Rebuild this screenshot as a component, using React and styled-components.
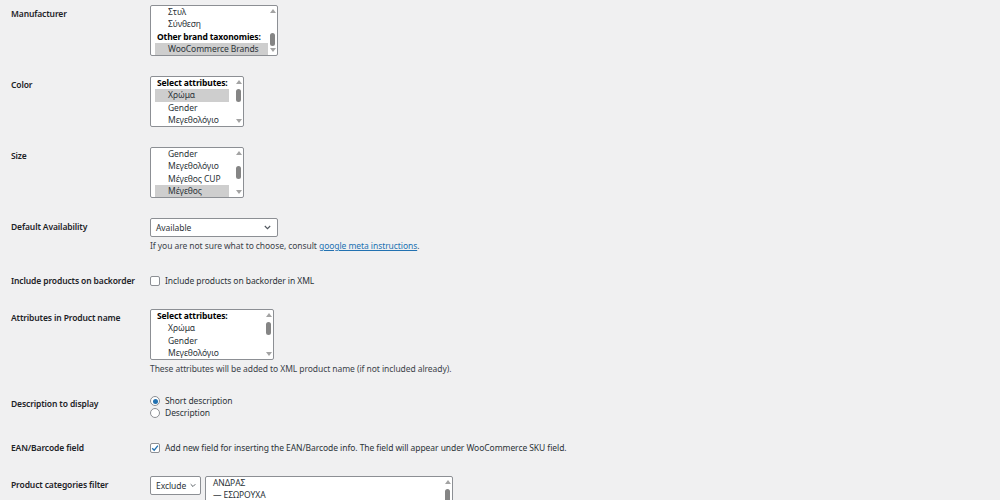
import React from 'react';
import styled, { createGlobalStyle } from 'styled-components';

const GlobalStyle = createGlobalStyle`
  html, body {
    margin: 0;
    padding: 0;
    background: #f0f0f1;
  }
  body {
    font-family: "Noto Sans", "Open Sans", sans-serif;
    font-size: 8.5px;
    letter-spacing: -0.07px;
    color: #2c3338;
  }
`;

const Page = styled.div`
  width: 1000px;
  height: 500px;
  overflow: hidden;
  padding: 0 0 0 11px;
  box-sizing: border-box;
`;

const FormTable = styled.div`
  margin-top: -5px;
  display: grid;
  grid-template-columns: 139px 1fr;
`;

const Label = styled.div`
  padding-top: 13px;
  line-height: 12px;
  font-weight: 600;
  letter-spacing: -0.12px;
  color: #1d2327;
`;

const Field = styled.div`
  padding: 10px 0;
  line-height: 12px;
`;

const ListBox = styled.div`
  display: flex;
  width: ${(p) => p.width}px;
  height: 51px;
  box-sizing: border-box;
  background: #fff;
  border: 1px solid #8c8f94;
  border-radius: 2px;
  overflow: hidden;
`;

const Options = styled.div`
  flex: 1;
  padding: 0 ${(p) => p.gap}px 0 4px;
  overflow: hidden;
`;

const Group = styled.div`
  height: 12.3px;
  line-height: 12.3px;
  padding-left: 2px;
  font-weight: 700;
  letter-spacing: -0.12px;
  color: #000;
  white-space: nowrap;
`;

const Option = styled.div`
  height: 12.3px;
  line-height: 12.3px;
  padding-left: ${(p) => (p.flat ? 3 : 13)}px;
  color: #2c3338;
  white-space: nowrap;
  background: ${(p) => (p.selected ? '#cecece' : 'transparent')};
`;

const Scroll = styled.div`
  width: 9px;
  flex: none;
  display: flex;
  flex-direction: column;
  align-items: center;
  padding: 3px 0;
`;

const Arrow = styled.div`
  width: 0;
  height: 0;
  border-left: 3px solid transparent;
  border-right: 3px solid transparent;
  ${(p) => (p.down ? 'border-top: 4px solid #a3a3a3;' : 'border-bottom: 4px solid #a3a3a3;')}
`;

const Track = styled.div`
  flex: 1;
  display: flex;
  flex-direction: column;
  align-items: center;
  padding-top: ${(p) => p.offset}px;
`;

const Thumb = styled.div`
  width: 5px;
  height: 13px;
  margin-top: 4px;
  border-radius: 3px;
  background: #858585;
`;

const Select = styled.div`
  display: flex;
  align-items: center;
  justify-content: space-between;
  width: ${(p) => p.width}px;
  height: 19px;
  box-sizing: border-box;
  padding: 0 ${(p) => (p.compact ? 4 : 6)}px 0 5px;
  gap: 3px;
  background: #fff;
  border: 1px solid #8c8f94;
  border-radius: 2px;
  color: #2c3338;
`;

const Description = styled.p`
  margin: 3px 0 0;
  line-height: 12px;
  color: #3c434a;
`;

const Link = styled.a`
  color: #2271b1;
  text-decoration: underline;
`;

const CheckRow = styled.label`
  display: flex;
  align-items: center;
  gap: 5px;
  height: ${(p) => (p.tall ? 17 : 12)}px;
  color: #2c3338;
`;

const Box = styled.span`
  width: 10px;
  height: 10px;
  box-sizing: border-box;
  flex: none;
  background: #fff;
  border: 1px solid #8c8f94;
  border-radius: 2px;
  display: flex;
  align-items: center;
  justify-content: center;
`;

const Radio = styled.span`
  width: 10px;
  height: 10px;
  box-sizing: border-box;
  flex: none;
  background: #fff;
  border: 1px solid #8c8f94;
  border-radius: 50%;
  display: flex;
  align-items: center;
  justify-content: center;
  &::after {
    content: '';
    width: 5px;
    height: 5px;
    border-radius: 50%;
    background: ${(p) => (p.checked ? '#2271b1' : 'transparent')};
  }
`;

const Inline = styled.div`
  display: flex;
  gap: 4px;
  align-items: flex-start;
`;

const Chevron = ({ size = 7 }) => (
  <svg width={size} height="5" viewBox="0 0 7 5">
    <path d="M0.8 1 L3.5 3.7 L6.2 1" fill="none" stroke="#50575e" strokeWidth="1.1" />
  </svg>
);

const Tick = () => (
  <svg width="8" height="8" viewBox="0 0 8 8">
    <path d="M1.2 4.2 L3.2 6.2 L6.9 1.6" fill="none" stroke="#2271b1" strokeWidth="1.3" />
  </svg>
);

const ScrollBar = ({ offset }) => (
  <Scroll>
    <Arrow />
    <Track offset={offset}>
      <Thumb />
    </Track>
    <Arrow down />
  </Scroll>
);

const List = ({ width, offset, gap = 0, children }) => (
  <ListBox width={width}>
    <Options gap={gap}>{children}</Options>
    <ScrollBar offset={offset} />
  </ListBox>
);

const App = () => (
  <>
    <GlobalStyle />
    <Page>
      <FormTable>
        <Label>Manufacturer</Label>
        <Field>
          <List width={128} offset={16}>
            <Option>Στυλ</Option>
            <Option>Σύνθεση</Option>
            <Group>Other brand taxonomies:</Group>
            <Option selected>WooCommerce Brands</Option>
          </List>
        </Field>

        <Label>Color</Label>
        <Field>
          <List width={94} offset={1} gap={5}>
            <Group>Select attributes:</Group>
            <Option selected>Χρώμα</Option>
            <Option>Gender</Option>
            <Option>Μεγεθολόγιο</Option>
          </List>
        </Field>

        <Label>Size</Label>
        <Field>
          <List width={94} offset={7} gap={5}>
            <Option>Gender</Option>
            <Option>Μεγεθολόγιο</Option>
            <Option>Μέγεθος CUP</Option>
            <Option selected>Μέγεθος</Option>
          </List>
        </Field>

        <Label>Default Availability</Label>
        <Field>
          <Select width={128}>
            <span>Available</span>
            <Chevron />
          </Select>
          <Description>
            If you are not sure what to choose, consult <Link>google meta instructions</Link>.
          </Description>
        </Field>

        <Label>Include products on backorder</Label>
        <Field>
          <CheckRow tall>
            <Box />
            Include products on backorder in XML
          </CheckRow>
        </Field>

        <Label>Attributes in Product name</Label>
        <Field>
          <List width={124} offset={1}>
            <Group>Select attributes:</Group>
            <Option>Χρώμα</Option>
            <Option>Gender</Option>
            <Option>Μεγεθολόγιο</Option>
          </List>
          <Description>These attributes will be added to XML product name (if not included already).</Description>
        </Field>

        <Label>Description to display</Label>
        <Field>
          <CheckRow>
            <Radio checked />
            Short description
          </CheckRow>
          <CheckRow>
            <Radio />
            Description
          </CheckRow>
        </Field>

        <Label>EAN/Barcode field</Label>
        <Field>
          <CheckRow tall>
            <Box>
              <Tick />
            </Box>
            Add new field for inserting the EAN/Barcode info. The field will appear under WooCommerce SKU field.
          </CheckRow>
        </Field>

        <Label>Product categories filter</Label>
        <Field>
          <Inline>
            <Select width={51} compact>
              <span>Exclude</span>
              <Chevron size={6} />
            </Select>
            <List width={248} offset={1}>
              <Option flat>ΑΝΔΡΑΣ</Option>
              <Option flat>— ΕΣΩΡΟΥΧΑ</Option>
            </List>
          </Inline>
        </Field>
      </FormTable>
    </Page>
  </>
);

export default App;
